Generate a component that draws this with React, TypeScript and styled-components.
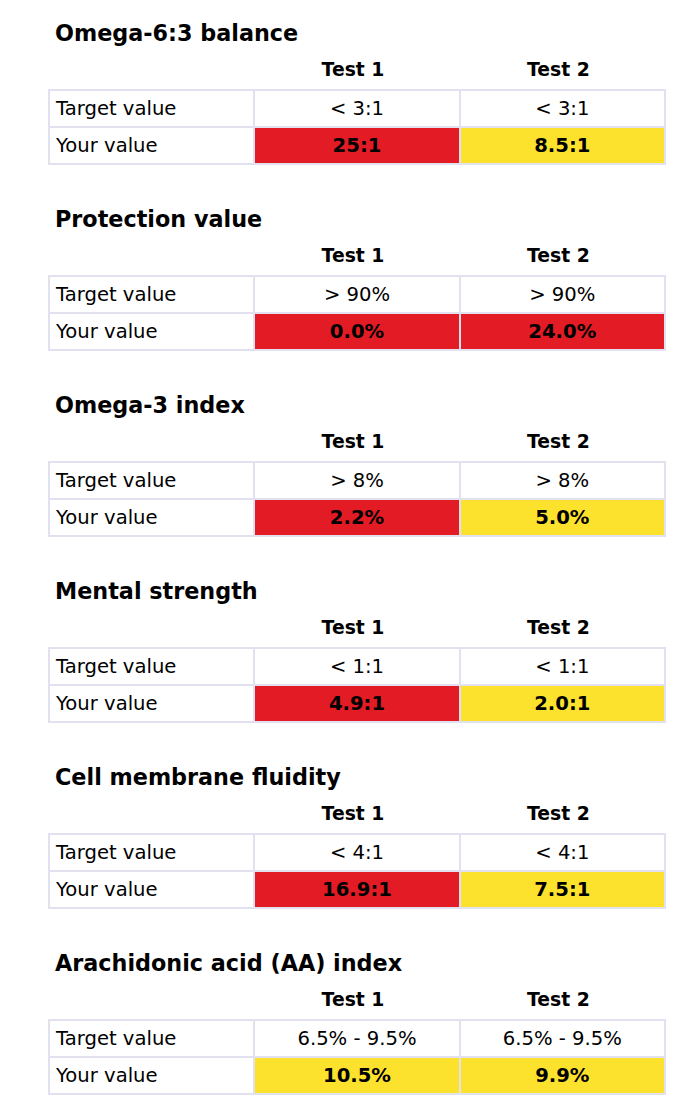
import React from "react";
import styled, { createGlobalStyle } from "styled-components";

const Global = createGlobalStyle`
  html, body { margin: 0; padding: 0; background: #ffffff; }
  body { font-family: "DejaVu Sans", Verdana, sans-serif; color: #000; }
`;

const Page = styled.div`
  display: flex;
  flex-direction: column;
  padding: 19px 34px 0 48px;
  width: 618px;
`;

const Section = styled.section`
  display: flex;
  flex-direction: column;
  margin-bottom: 40px;
`;

const Title = styled.h2`
  margin: 0 0 0 7px;
  font-size: 22.3px;
  line-height: 28px;
  font-weight: bold;
`;

const Table = styled.table`
  width: 618px;
  border-collapse: collapse;
  table-layout: fixed;
  font-size: 19.6px;
`;

const HeadCell = styled.th`
  font-weight: bold;
  font-size: 18.8px;
  text-align: center;
  height: 39px;
  padding: 3px 8px 0 0;
  vertical-align: middle;
`;

const Cell = styled.td<{ $tone?: "red" | "yellow"; $label?: boolean }>`
  border: 2px solid #e2e1ef;
  height: 35px;
  padding: 0 6px;
  text-align: ${(p) => (p.$label ? "left" : "center")};
  font-weight: ${(p) => (p.$tone ? "bold" : "normal")};
  background: ${(p) =>
    p.$tone === "red" ? "#e21b24" : p.$tone === "yellow" ? "#fde22d" : "#ffffff"};
  vertical-align: middle;
`;

type Tone = "red" | "yellow";
type Data = {
  title: string;
  target: [string, string];
  value: [string, string];
  tone: [Tone, Tone];
};

const data: Data[] = [
  { title: "Omega-6:3 balance", target: ["< 3:1", "< 3:1"], value: ["25:1", "8.5:1"], tone: ["red", "yellow"] },
  { title: "Protection value", target: ["> 90%", "> 90%"], value: ["0.0%", "24.0%"], tone: ["red", "red"] },
  { title: "Omega-3 index", target: ["> 8%", "> 8%"], value: ["2.2%", "5.0%"], tone: ["red", "yellow"] },
  { title: "Mental strength", target: ["< 1:1", "< 1:1"], value: ["4.9:1", "2.0:1"], tone: ["red", "yellow"] },
  { title: "Cell membrane fluidity", target: ["< 4:1", "< 4:1"], value: ["16.9:1", "7.5:1"], tone: ["red", "yellow"] },
  { title: "Arachidonic acid (AA) index", target: ["6.5% - 9.5%", "6.5% - 9.5%"], value: ["10.5%", "9.9%"], tone: ["yellow", "yellow"] },
];

export default function App() {
  return (
    <>
      <Global />
      <Page>
        {data.map((d) => (
          <Section key={d.title}>
            <Title>{d.title}</Title>
            <Table>
              <thead>
                <tr>
                  <HeadCell />
                  <HeadCell>Test 1</HeadCell>
                  <HeadCell>Test 2</HeadCell>
                </tr>
              </thead>
              <tbody>
                <tr>
                  <Cell $label>Target value</Cell>
                  <Cell>{d.target[0]}</Cell>
                  <Cell>{d.target[1]}</Cell>
                </tr>
                <tr>
                  <Cell $label>Your value</Cell>
                  <Cell $tone={d.tone[0]}>{d.value[0]}</Cell>
                  <Cell $tone={d.tone[1]}>{d.value[1]}</Cell>
                </tr>
              </tbody>
            </Table>
          </Section>
        ))}
      </Page>
    </>
  );
}
